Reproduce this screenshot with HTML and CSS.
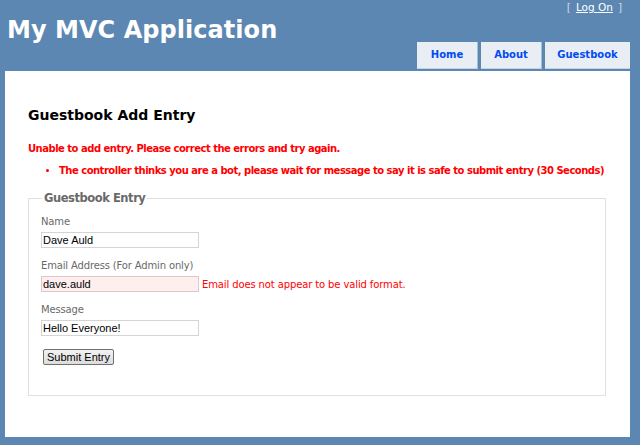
FILE: index.html
```html
<!DOCTYPE html>
<html>
<head>
<meta charset="utf-8">
<link rel="stylesheet" href="styles.css">
</head>
<body>
<div class="page">
  <div class="header">
    <h1 class="title">My MVC Application</h1>
    <div class="header-right">
      <div class="logindisplay">[<a href="#">Log On</a>]</div>
      <ul class="menu">
        <li><a href="#">Home</a></li>
        <li><a href="#">About</a></li>
        <li><a href="#" class="wide">Guestbook</a></li>
      </ul>
    </div>
  </div>
  <div class="main">
    <h2 class="heading">Guestbook Add Entry</h2>
    <div class="summary">
      <span>Unable to add entry. Please correct the errors and try again.</span>
      <ul class="summary-list">
        <li>The controller thinks you are a bot, please wait for message to say it is safe to submit entry (30 Seconds)</li>
      </ul>
    </div>
    <fieldset class="entry">
      <legend class="legend">Guestbook Entry</legend>
      <div class="field">
        <label class="label">Name</label>
        <div class="row"><input type="text" class="text" value="Dave Auld"></div>
      </div>
      <div class="field">
        <label class="label">Email Address (For Admin only)</label>
        <div class="row"><input type="text" class="text invalid" value="dave.auld"><span class="field-error">Email does not appear to be valid format.</span></div>
      </div>
      <div class="field">
        <label class="label">Message</label>
        <div class="row"><input type="text" class="text" value="Hello Everyone!"></div>
      </div>
      <div class="actions"><button type="button" class="submit">Submit Entry</button></div>
    </fieldset>
  </div>
</div>
</body>
</html>
```
FILE: styles.css
```css
html, body {
  margin: 0;
  padding: 0;
  background: #5c87b2;
  height: 100%;
}
body {
  font-family: "DejaVu Sans", Verdana, sans-serif;
  font-size: 10px;
  color: #696969;
}
.page {
  padding: 0 10px 8px 5px;
}
.header {
  display: flex;
  justify-content: space-between;
  height: 71px;
}
.title {
  margin: 0;
  padding: 14px 0 0 2px;
  color: #fff;
  font-size: 24px;
  font-weight: bold;
  line-height: 32px;
  letter-spacing: 0.05px;
}
.header-right {
  display: flex;
  flex-direction: column;
  align-items: flex-end;
  justify-content: space-between;
}
.logindisplay {
  color: #d8d8d8;
  font-size: 10.5px;
  padding: 1px 8px 0 0;
  line-height: 13px;
}
.logindisplay a {
  color: #fff;
  text-decoration: underline;
  margin: 0 5px;
}
.menu {
  list-style: none;
  margin: 0 0 2px;
  padding: 0;
  display: flex;
  gap: 3px;
}
.menu a {
  display: block;
  width: 60px;
  height: 26px;
  line-height: 26px;
  text-align: center;
  background: #e8eef4;
  color: #034af3;
  font-weight: bold;
  font-size: 10px;
  text-decoration: none;
  border-right: 1px solid #a9bdd3;
  border-bottom: 1px solid #c4d3e3;
}
.menu a.wide {
  width: 85px;
  border-right: none;
}
.main {
  background: #fff;
  height: 336px;
  padding: 30px 24px 0 23px;
}
.heading {
  margin: 0;
  color: #000;
  font-size: 14px;
  font-weight: bold;
  line-height: 18px;
  padding-top: 5px;
}
.summary {
  color: #ff0000;
  font-weight: bold;
  font-size: 10px;
  letter-spacing: -0.5px;
  margin-top: 18px;
  line-height: 13px;
}
.summary-list {
  margin: 9px 0 0;
  padding-left: 31px;
}
.entry {
  margin: 14px 0 0;
  border: 1px solid #e0e0e0;
  padding: 10px 12px 30px 12px;
}
.legend {
  font-size: 11.5px;
  font-weight: bold;
  letter-spacing: -0.45px;
  padding: 0 2px;
  margin-left: 1px;
  color: #696969;
}
.field {
  display: flex;
  flex-direction: column;
}
.label {
  font-size: 10px;
  letter-spacing: -0.15px;
  line-height: 13px;
}
.field + .field .label {
  margin-top: 11px;
}
.row {
  display: flex;
  align-items: center;
  margin-top: 4px;
}
.text {
  box-sizing: border-box;
  width: 158px;
  height: 16px;
  margin: 0;
  padding: 0 1px;
  border: 1px solid #d4d4d4;
  font-family: "Liberation Sans", Arial, sans-serif;
  font-size: 11px;
  color: #000;
  background: #fff;
}
.text.invalid {
  background: #ffeeee;
  border-color: #dcc8c8;
}
.field-error {
  color: #ff0000;
  font-size: 10px;
  letter-spacing: -0.12px;
  margin-left: 3px;
}
.actions {
  margin-top: 13px;
  padding-left: 2px;
}
.submit {
  font-family: "Liberation Sans", Arial, sans-serif;
  font-size: 11px;
  height: 16px;
  line-height: 12px;
  padding: 0 3px;
  border: 1px solid #707070;
  border-radius: 2px;
  background: linear-gradient(#f2f2f2, #dcdcdc);
  color: #000;
}
```
